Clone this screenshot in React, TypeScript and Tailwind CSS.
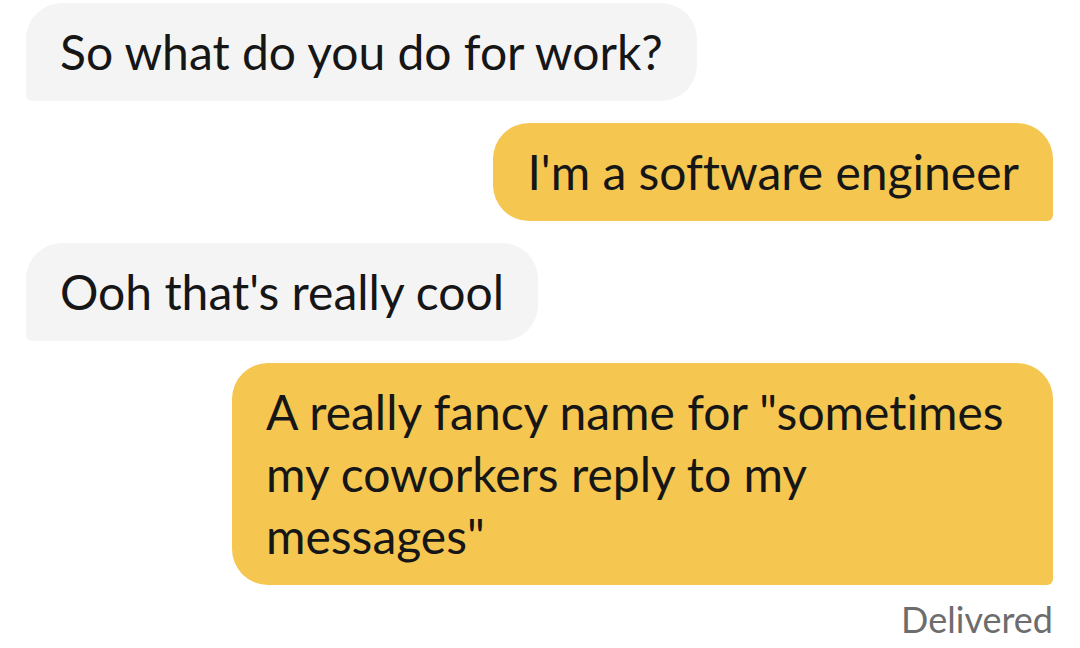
import React from 'react';

interface Message {
  text: string;
  mine: boolean;
}

const messages: Message[] = [
  { text: 'So what do you do for work?', mine: false },
  { text: "I'm a software engineer", mine: true },
  { text: "Ooh that's really cool", mine: false },
  { text: 'A really fancy name for "sometimes my coworkers reply to my messages"', mine: true },
];

function Bubble({ message }: { message: Message }) {
  if (message.mine) {
    return (
      <div className="flex justify-end">
        <div className="max-w-[821px] rounded-[36px] rounded-br-[6px] bg-[#f5c650] px-[34px] py-[18px] text-[#161616]">
          {message.text}
        </div>
      </div>
    );
  }
  return (
    <div className="flex justify-start">
      <div className="max-w-[821px] rounded-[36px] rounded-bl-[6px] bg-[#f4f4f4] px-[34px] py-[18px] text-[#161616]">
        {message.text}
      </div>
    </div>
  );
}

export default function App() {
  return (
    <div
      className="h-[648px] w-[1080px] overflow-hidden bg-white pl-[26px] pr-[27px] pt-[3px] text-[48px] leading-[62px] [font-variant-ligatures:none]"
      style={{ fontFamily: 'Lato, "Noto Sans", sans-serif' }}
    >
      <div className="flex flex-col gap-[22px]">
        {messages.map((m, i) => (
          <Bubble key={i} message={m} />
        ))}
      </div>
      <div className="mt-[14px] text-right text-[36px] leading-[40px] text-[#6d6d6d]">Delivered</div>
    </div>
  );
}
